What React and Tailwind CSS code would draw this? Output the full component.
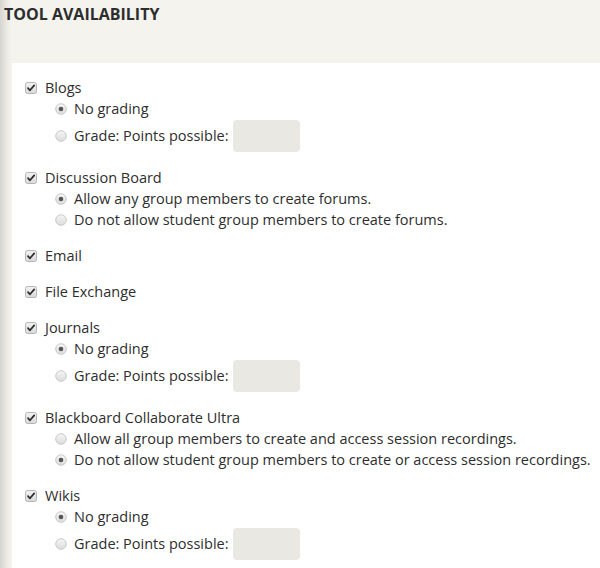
import React from 'react';

const font = { fontFamily: '"Open Sans", "Liberation Sans", sans-serif' };

const Checkbox = () => (
  <svg width="12" height="12" viewBox="0 0 12 12" className="shrink-0">
    <defs>
      <linearGradient id="cbg" x1="0" y1="0" x2="0" y2="1">
        <stop offset="0" stopColor="#f2f2f2" />
        <stop offset="1" stopColor="#d9d9d9" />
      </linearGradient>
    </defs>
    <rect x="0.5" y="0.5" width="11" height="11" rx="2" fill="url(#cbg)" stroke="#b5b5b5" />
    <path d="M3 6.2 L5 8.3 L9.2 3.4" fill="none" stroke="#2b2b2b" strokeWidth="1.7" strokeLinecap="round" strokeLinejoin="round" />
  </svg>
);

const Radio = ({ checked }) => (
  <svg width="12" height="12" viewBox="0 0 12 12" className="shrink-0">
    <defs>
      <linearGradient id="rbg" x1="0" y1="0" x2="0" y2="1">
        <stop offset="0" stopColor="#f5f5f5" />
        <stop offset="1" stopColor="#dcdcdc" />
      </linearGradient>
    </defs>
    <circle cx="6" cy="6" r="5.3" fill="url(#rbg)" stroke="#c4c4c4" strokeWidth="0.9" />
    {checked && <circle cx="6" cy="6" r="2.3" fill="#555" />}
  </svg>
);

const Option = ({ checked, label, points }) => (
  <div className={`flex items-center ${points ? 'h-[33px]' : 'h-[21px]'}`}>
    <Radio checked={checked} />
    <span className="ml-[7px]">{label}</span>
    {points && <div className="ml-[4px] w-[67px] h-8 rounded bg-[#e9e8e2]" />}
  </div>
);

const Tool = ({ name, children }) => (
  <div className="mb-[15px]">
    <div className="flex items-center h-[21px]">
      <Checkbox />
      <span className="ml-[8px]">{name}</span>
    </div>
    {children && <div className="pl-[30px]">{children}</div>}
  </div>
);

const Grading = () => (
  <>
    <Option checked label="No grading" />
    <Option label="Grade: Points possible:" points />
  </>
);

export default function App() {
  return (
    <div
      style={font}
      className="w-[600px] h-[568px] overflow-hidden flex flex-col bg-[linear-gradient(to_right,#d7d5cf,#eeede8_8px,#f4f3ee_12px)] text-[#2e2e2e] text-[14.5px]"
    >
      <div className="h-[63px] shrink-0 pl-[4px] pt-[2px]">
        <h2 className="text-[16px] font-bold leading-[24px] text-[#2d2d2d]">TOOL AVAILABILITY</h2>
      </div>
      <div className="ml-3 flex-1 bg-white pl-[13px] pt-[14px]">
        <Tool name="Blogs">
          <Grading />
        </Tool>
        <Tool name="Discussion Board">
          <Option checked label="Allow any group members to create forums." />
          <Option label="Do not allow student group members to create forums." />
        </Tool>
        <Tool name="Email" />
        <Tool name="File Exchange" />
        <Tool name="Journals">
          <Grading />
        </Tool>
        <Tool name="Blackboard Collaborate Ultra">
          <Option label="Allow all group members to create and access session recordings." />
          <Option checked label="Do not allow student group members to create or access session recordings." />
        </Tool>
        <Tool name="Wikis">
          <Grading />
        </Tool>
      </div>
    </div>
  );
}
